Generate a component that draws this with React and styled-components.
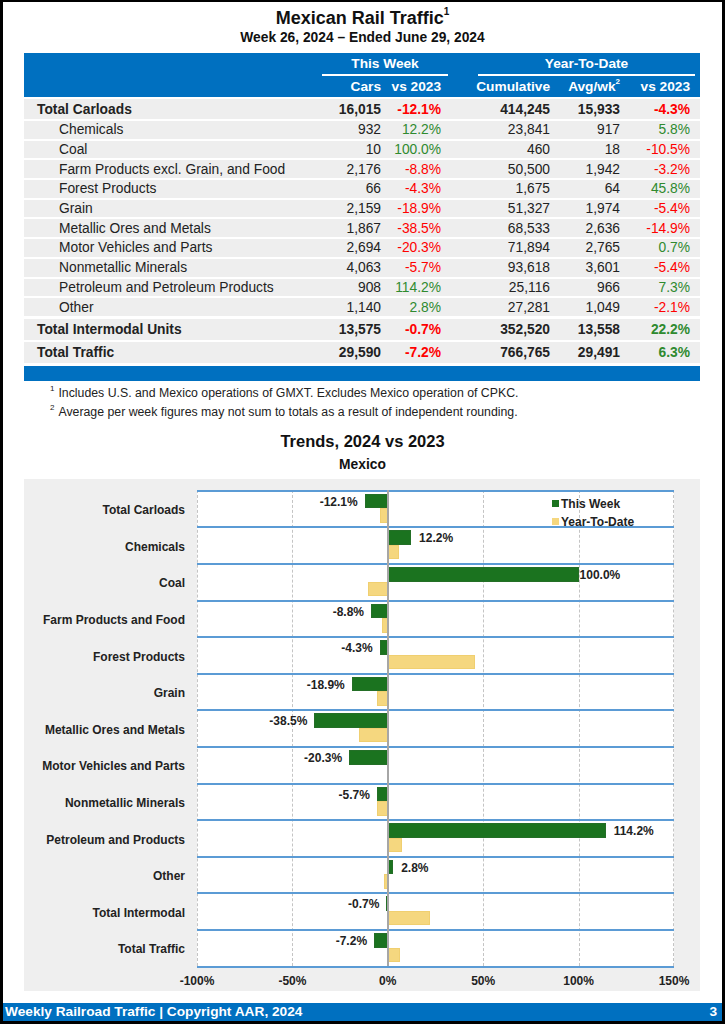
import React from "react";
import styled, { createGlobalStyle } from "styled-components";

const SANS = `"Liberation Sans", Arial, Helvetica, sans-serif`;
const BLUE = "#0070c0";
const RED = "#ff0000";
const GREEN = "#2f8a2f";

const Global = createGlobalStyle`
  body { margin: 0; background: #000; font-family: ${SANS}; }
`;

const rows = [
  { name: "Total Carloads", cars: "16,015", wk: "-12.1%", cum: "414,245", avg: "15,933", ytd: "-4.3%", total: true },
  { name: "Chemicals", cars: "932", wk: "12.2%", cum: "23,841", avg: "917", ytd: "5.8%" },
  { name: "Coal", cars: "10", wk: "100.0%", cum: "460", avg: "18", ytd: "-10.5%" },
  { name: "Farm Products excl. Grain, and Food", cars: "2,176", wk: "-8.8%", cum: "50,500", avg: "1,942", ytd: "-3.2%" },
  { name: "Forest Products", cars: "66", wk: "-4.3%", cum: "1,675", avg: "64", ytd: "45.8%" },
  { name: "Grain", cars: "2,159", wk: "-18.9%", cum: "51,327", avg: "1,974", ytd: "-5.4%" },
  { name: "Metallic Ores and Metals", cars: "1,867", wk: "-38.5%", cum: "68,533", avg: "2,636", ytd: "-14.9%" },
  { name: "Motor Vehicles and Parts", cars: "2,694", wk: "-20.3%", cum: "71,894", avg: "2,765", ytd: "0.7%" },
  { name: "Nonmetallic Minerals", cars: "4,063", wk: "-5.7%", cum: "93,618", avg: "3,601", ytd: "-5.4%" },
  { name: "Petroleum and Petroleum Products", cars: "908", wk: "114.2%", cum: "25,116", avg: "966", ytd: "7.3%" },
  { name: "Other", cars: "1,140", wk: "2.8%", cum: "27,281", avg: "1,049", ytd: "-2.1%" },
  { name: "Total Intermodal Units", cars: "13,575", wk: "-0.7%", cum: "352,520", avg: "13,558", ytd: "22.2%", total: true, big: true },
  { name: "Total Traffic", cars: "29,590", wk: "-7.2%", cum: "766,765", avg: "29,491", ytd: "6.3%", total: true, big: true },
];

const chart = [
  { name: "Total Carloads", wk: -12.1, ytd: -4.3 },
  { name: "Chemicals", wk: 12.2, ytd: 5.8 },
  { name: "Coal", wk: 100.0, ytd: -10.5, gap: 1 },
  { name: "Farm Products and Food", wk: -8.8, ytd: -3.2 },
  { name: "Forest Products", wk: -4.3, ytd: 45.8 },
  { name: "Grain", wk: -18.9, ytd: -5.4 },
  { name: "Metallic Ores and Metals", wk: -38.5, ytd: -14.9 },
  { name: "Motor Vehicles and Parts", wk: -20.3, ytd: 0.7 },
  { name: "Nonmetallic Minerals", wk: -5.7, ytd: -5.4 },
  { name: "Petroleum and Products", wk: 114.2, ytd: 7.3 },
  { name: "Other", wk: 2.8, ytd: -2.1 },
  { name: "Total Intermodal", wk: -0.7, ytd: 22.2 },
  { name: "Total Traffic", wk: -7.2, ytd: 6.3 },
];

const PLOT_W = 477;
const MIN = -100;
const MAX = 150;
const px = (v) => ((v - MIN) / (MAX - MIN)) * PLOT_W;
const ticks = [-100, -50, 0, 50, 100, 150];

const Page = styled.div`
  margin: 2px 3px 0;
  width: 719px;
  height: 1019px;
  background: #fff;
  display: flex;
  flex-direction: column;
`;

const Content = styled.div`
  flex: 1;
  padding: 0 21px;
`;

const Title = styled.h1`
  margin: 4px 0 0;
  text-align: center;
  font-size: 18px;
  line-height: 24px;
  font-weight: bold;
  color: #111;
  sup { font-size: 10px; line-height: 1; vertical-align: top; position: relative; top: 1px; }
`;

const Subtitle = styled.div`
  margin-top: -1px;
  text-align: center;
  font-size: 13.8px;
  line-height: 18px;
  font-weight: bold;
  color: #111;
`;

const cols = "297px 60px 60px 109px 70px 70px";

const Table = styled.div`
  margin-top: 6px;
  width: 676px;
`;

const Head = styled.div`
  background: ${BLUE};
  color: #fff;
  font-weight: bold;
  font-size: 13.7px;
  height: 44px;
`;

const HeadRow = styled.div`
  display: grid;
  grid-template-columns: ${cols};
  padding-right: 10px;
  height: ${(p) => p.$h}px;
  align-items: center;
`;

const Group = styled.div`
  grid-column: ${(p) => p.$span};
  margin: 0 ${(p) => p.$mr}px 0 ${(p) => p.$ml}px;
  align-self: stretch;
  display: flex;
  align-items: center;
  justify-content: center;
  border-bottom: 2px solid #fff;
`;

const HeadCell = styled.div`
  text-align: right;
  white-space: nowrap;
  sup { font-size: 8px; line-height: 1; vertical-align: top; position: relative; top: -1px; }
`;

const Row = styled.div`
  display: grid;
  grid-template-columns: ${cols};
  padding-right: 10px;
  margin-top: ${(p) => p.$mt}px;
  height: ${(p) => p.$h}px;
  align-items: center;
  background: #eeeeee;
  font-size: 13.8px;
  color: #222;
  font-weight: ${(p) => (p.$bold ? "bold" : "normal")};
`;

const Name = styled.div`
  padding-left: ${(p) => (p.$indent ? 35 : 13)}px;
  white-space: nowrap;
`;

const Num = styled.div`
  text-align: right;
  color: ${(p) => p.$color || "#222"};
`;

const BottomBar = styled.div`
  margin-top: 3px;
  height: 15px;
  background: ${BLUE};
`;

const Notes = styled.div`
  margin-top: 3px;
  padding-left: 26px;
  font-size: 12.3px;
  color: #222;
`;

const Note = styled.div`
  line-height: 19px;
  sup { font-size: 8px; line-height: 1; vertical-align: top; position: relative; top: 1px; margin-right: 4px; }
`;

const ChartTitle = styled.div`
  margin-top: 8px;
  text-align: center;
  font-size: 16.5px;
  line-height: 22px;
  font-weight: bold;
  color: #111;
`;

const ChartSub = styled.div`
  margin-top: 4px;
  text-align: center;
  font-size: 13.8px;
  line-height: 18px;
  font-weight: bold;
  color: #111;
`;

const ChartBox = styled.div`
  margin-top: 5px;
  width: 676px;
  height: 512px;
  background: #efefef;
  display: grid;
  grid-template-columns: 173px ${PLOT_W}px;
  grid-template-rows: auto 24px;
  align-content: start;
  padding-top: 11px;
  box-sizing: border-box;
  font-size: 12px;
  font-weight: bold;
  color: #222;
`;

const Labels = styled.div`
  display: flex;
  flex-direction: column;
  padding-top: 2px;
`;

const CatLabel = styled.div`
  height: 36.6px;
  display: flex;
  align-items: center;
  justify-content: flex-end;
  padding-right: 12px;
  box-sizing: border-box;
  white-space: nowrap;
`;

const Plot = styled.div`
  position: relative;
  background: #fff;
  border-bottom: 2px solid #5b9bd5;
`;

const Grid = styled.div`
  position: absolute;
  top: 0;
  bottom: 0;
  width: 0;
  border-left: ${(p) => (p.$zero ? "2px solid #a6a6a6" : "1px dashed #c4c4c4")};
  margin-left: ${(p) => (p.$zero ? -1 : 0)}px;
  z-index: ${(p) => (p.$zero ? 3 : 0)};
`;

const Band = styled.div`
  position: relative;
  height: 36.6px;
  border-top: 2px solid #5b9bd5;
  box-sizing: border-box;
  z-index: 1;
`;

const Bar = styled.div`
  position: absolute;
  top: ${(p) => (p.$ytd ? 16.5 : 2)}px;
  height: 14.5px;
  background: ${(p) => (p.$ytd ? "#f5d77f" : "#1b731f")};
  box-shadow: inset 0 0 0 1px ${(p) => (p.$ytd ? "#f0cf70" : "#246f27")};
`;

const BarLabel = styled.span`
  position: absolute;
  top: 2px;
  line-height: 16px;
  white-space: nowrap;
`;

const Legend = styled.div`
  position: absolute;
  left: 355px;
  top: 6px;
  z-index: 4;
  display: flex;
  flex-direction: column;
  gap: 2px;
`;

const LegendItem = styled.div`
  display: flex;
  align-items: center;
  gap: 2px;
  line-height: 16px;
  &::before {
    content: "";
    width: 7px;
    height: 7px;
    background: ${(p) => p.$color};
  }
`;

const Axis = styled.div`
  grid-column: 2;
  position: relative;
`;

const Tick = styled.span`
  position: absolute;
  top: 6px;
  transform: translateX(-50%);
`;

const Footer = styled.div`
  height: 18px;
  background: ${BLUE};
  color: #fff;
  font-weight: bold;
  font-size: 13.7px;
  line-height: 18px;
  display: flex;
  justify-content: space-between;
  padding: 0 5px 0 2px;
`;

const pctColor = (s) => (s.startsWith("-") ? RED : GREEN);

function TrafficTable() {
  return (
    <Table>
      <Head>
        <HeadRow $h={23}>
          <div />
          <Group $span="2 / 4" $ml={1} $mr={-7}>This Week</Group>
          <Group $span="4 / 7" $ml={37} $mr={-5}>Year-To-Date</Group>
        </HeadRow>
        <HeadRow $h={21}>
          <div />
          <HeadCell>Cars</HeadCell>
          <HeadCell>vs 2023</HeadCell>
          <HeadCell>Cumulative</HeadCell>
          <HeadCell>Avg/wk<sup>2</sup></HeadCell>
          <HeadCell>vs 2023</HeadCell>
        </HeadRow>
      </Head>
      {rows.map((r, i) => (
        <Row
          key={r.name}
          $bold={r.total}
          $h={i === 0 ? 20 : r.big ? 21 : 17.7}
          $mt={i === 11 ? 3 : 2}
        >
          <Name $indent={!r.total}>{r.name}</Name>
          <Num>{r.cars}</Num>
          <Num $color={pctColor(r.wk)}>{r.wk}</Num>
          <Num>{r.cum}</Num>
          <Num>{r.avg}</Num>
          <Num $color={pctColor(r.ytd)}>{r.ytd}</Num>
        </Row>
      ))}
      <BottomBar />
    </Table>
  );
}

function TrendChart() {
  const zero = px(0);
  return (
    <ChartBox>
      <Labels>
        {chart.map((c) => (
          <CatLabel key={c.name}>{c.name}</CatLabel>
        ))}
      </Labels>
      <Plot>
        {ticks.map((t) => (
          <Grid key={t} $zero={t === 0} style={{ left: px(t) - (t === 150 ? 1 : 0) }} />
        ))}
        <Legend>
          <LegendItem $color="#1b731f">This Week</LegendItem>
          <LegendItem $color="#f5d77f">Year-To-Date</LegendItem>
        </Legend>
        {chart.map((c) => {
          const wl = Math.min(zero, px(c.wk));
          const ww = Math.abs(px(c.wk) - zero);
          const yl = Math.min(zero, px(c.ytd));
          const yw = Math.abs(px(c.ytd) - zero);
          const gap = c.gap ?? 8;
          const label = `${c.wk.toFixed(1)}%`;
          return (
            <Band key={c.name}>
              <Bar style={{ left: wl, width: ww }} />
              <Bar $ytd style={{ left: yl, width: yw }} />
              {c.wk >= 0 ? (
                <BarLabel style={{ left: px(c.wk) + gap }}>{label}</BarLabel>
              ) : (
                <BarLabel style={{ right: PLOT_W - px(c.wk) + 7 }}>{label}</BarLabel>
              )}
            </Band>
          );
        })}
      </Plot>
      <Axis>
        {ticks.map((t) => (
          <Tick key={t} style={{ left: px(t) }}>{t}%</Tick>
        ))}
      </Axis>
    </ChartBox>
  );
}

export default function App() {
  return (
    <>
      <Global />
      <Page>
        <Content>
          <Title>Mexican Rail Traffic<sup>1</sup></Title>
          <Subtitle>Week 26, 2024 – Ended June 29, 2024</Subtitle>
          <TrafficTable />
          <Notes>
            <Note><sup>1</sup>Includes U.S. and Mexico operations of GMXT. Excludes Mexico operation of CPKC.</Note>
            <Note><sup>2</sup>Average per week figures may not sum to totals as a result of independent rounding.</Note>
          </Notes>
          <ChartTitle>Trends, 2024 vs 2023</ChartTitle>
          <ChartSub>Mexico</ChartSub>
          <TrendChart />
        </Content>
        <Footer>
          <span>Weekly Railroad Traffic | Copyright AAR, 2024</span>
          <span>3</span>
        </Footer>
      </Page>
    </>
  );
}
